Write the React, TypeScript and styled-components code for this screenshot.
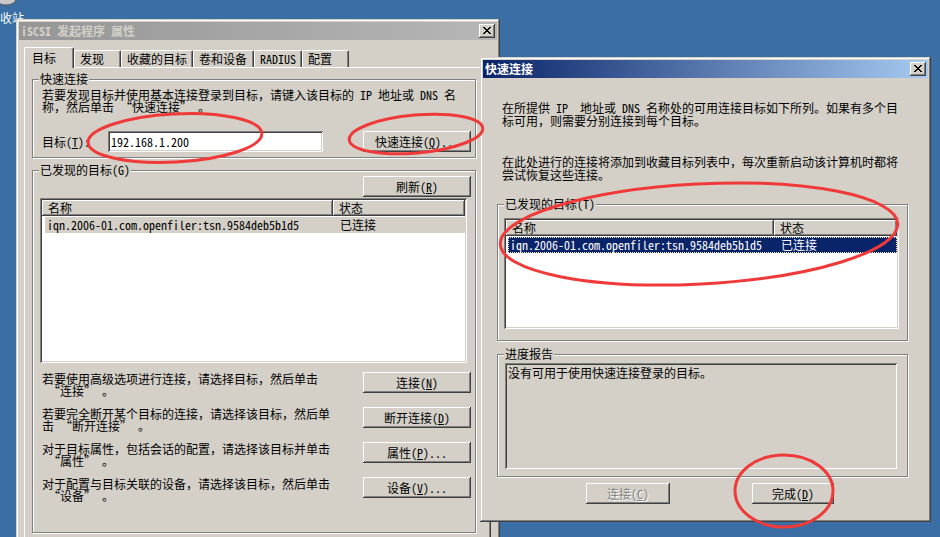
import React from "react";
import styled, { createGlobalStyle } from "styled-components";

const FACE = "#d4d0c8";
const FONT = `"Noto Sans Mono CJK SC", "Noto Sans CJK SC", sans-serif`;

const GlobalStyle = createGlobalStyle`
  html, body { margin: 0; padding: 0; }
  body {
    background: #3a6ea5;
    font-family: ${FONT};
    font-size: 12px;
    overflow: hidden;
  }
`;

const Desktop = styled.div`
  position: relative;
  width: 940px;
  height: 537px;
  overflow: hidden;
  background: #3a6ea5;
  color: #000;
  font-family: ${FONT};
  font-size: 12px;
  line-height: 12px;
`;

const DesktopIcon = styled.div`
  position: absolute;
  left: 0;
  top: 0;
  display: flex;
  flex-direction: column;
  color: #fff;
  font-size: 12px;
  line-height: 12px;
  svg {
    display: block;
  }
  span {
    margin-top: 6px;
  }
`;

// windows sit on the desktop at their own spot
const Window = styled.div<{ $left: number; $top: number; $width: number; $height: number }>`
  position: absolute;
  left: ${(p) => p.$left}px;
  top: ${(p) => p.$top}px;
  width: ${(p) => p.$width}px;
  height: ${(p) => p.$height}px;
  box-sizing: border-box;
  padding: 3px;
  background: ${FACE};
  box-shadow: inset -1px -1px #404040, inset 1px 1px ${FACE},
    inset -2px -2px #808080, inset 2px 2px #fff;
  display: flex;
  flex-direction: column;
`;

const TitleBar = styled.div<{ $active?: boolean }>`
  height: 18px;
  flex-shrink: 0;
  display: flex;
  align-items: center;
  justify-content: space-between;
  padding: 0 2px;
  background: ${(p) =>
    p.$active
      ? "linear-gradient(to right, #0a246a, #a6caf0)"
      : "linear-gradient(to right, #969696, #b6b6b6)"};
  color: ${(p) => (p.$active ? "#fff" : FACE)};
  font-weight: bold;
  white-space: pre;
`;

const CloseButton = styled.div`
  width: 16px;
  height: 14px;
  box-sizing: border-box;
  background: ${FACE};
  box-shadow: inset -1px -1px #404040, inset 1px 1px #fff,
    inset -2px -2px #808080;
  display: flex;
  padding: 3px 0 0 4px;
  svg {
    display: block;
  }
`;

const CloseGlyph = () => (
  <svg width="8" height="7" viewBox="0 0 8 7" shapeRendering="crispEdges">
    {[0, 1, 2, 3, 4, 5, 6].map((i) => (
      <React.Fragment key={i}>
        <rect x={i} y={i} width={2} height={1} fill="#000" />
        <rect x={6 - i} y={i} width={2} height={1} fill="#000" />
      </React.Fragment>
    ))}
  </svg>
);

const Btn = styled.button<{ $w: number }>`
  width: ${(p) => p.$w}px;
  height: 21px;
  flex-shrink: 0;
  margin: 0;
  padding: 0;
  border: none;
  background: ${FACE};
  font: inherit;
  font-size: 12px;
  line-height: 12px;
  color: #000;
  box-shadow: inset -1px -1px #404040, inset 1px 1px #fff,
    inset -2px -2px #808080, inset 2px 2px ${FACE};
  display: flex;
  align-items: center;
  justify-content: center;
  white-space: pre;
  &:disabled {
    color: #808080;
    text-shadow: 1px 1px #fff;
  }
`;

// the mono font draws quote marks half width; pad them to a full cell
const withQuotes = (text: string) =>
  text.replace(/“/g, "\u2002“").replace(/”/g, "”\u2002");

/* ---------- property sheet ---------- */

const SheetBody = styled.div`
  flex: 1;
  display: flex;
  flex-direction: column;
  padding: 7px 6px 0 5px;
`;

const TabStrip = styled.div`
  display: flex;
  align-items: flex-end;
  height: 20px;
  padding-left: 2px;
  position: relative;
  z-index: 2;
`;

const Tab = styled.div<{ $w: number; $active?: boolean }>`
  width: ${(p) => p.$w}px;
  height: ${(p) => (p.$active ? 21 : 17)}px;
  margin: ${(p) => (p.$active ? "0 0 -1px -2px" : "0")};
  box-sizing: border-box;
  background: ${FACE};
  border-top: 1px solid #fff;
  border-left: 1px solid #fff;
  border-right: 1px solid #404040;
  border-top-left-radius: 2px;
  border-top-right-radius: 2px;
  box-shadow: inset -1px 0 #808080;
  padding: ${(p) => (p.$active ? "4px 0 0 7px" : "2px 0 0 5px")};
  white-space: pre;
`;

const TabPanel = styled.div`
  flex: 1;
  display: flex;
  flex-direction: column;
  padding: 5px 0 0 7px;
  border-top: 1px solid #fff;
  border-left: 1px solid #fff;
  border-right: 1px solid #404040;
  box-shadow: inset -1px 0 #808080;
`;

const GroupBox = styled.fieldset<{ $w: number; $mt?: number }>`
  margin: ${(p) => p.$mt ?? 0}px 0 0 0;
  padding: 0;
  min-width: 0;
  width: ${(p) => p.$w}px;
  box-sizing: border-box;
  border: 1px solid #808080;
  box-shadow: inset 1px 1px #fff, 1px 1px #fff;
`;

const Legend = styled.legend`
  margin-left: 6px;
  padding: 0 1px;
  line-height: 12px;
  font-size: 12px;
  background: ${FACE};
  position: relative;
  white-space: pre;
`;

const GroupBody = styled.div<{ $pad: string }>`
  padding: ${(p) => p.$pad};
  display: flex;
  flex-direction: column;
`;

const Para = styled.div<{ $lh?: number; $mt?: number; $ml?: number }>`
  line-height: ${(p) => p.$lh ?? 12}px;
  margin-top: ${(p) => p.$mt ?? 0}px;
  margin-left: ${(p) => p.$ml ?? 0}px;
  white-space: pre;
`;

const TargetRow = styled.div`
  margin-top: 18px;
  display: flex;
  align-items: center;
  height: 21px;
`;

const FieldLabel = styled.span`
  width: 66px;
  flex-shrink: 0;
`;

const TextInput = styled.input`
  width: 215px;
  height: 21px;
  box-sizing: border-box;
  margin: 0 auto 0 0;
  padding: 0 3px;
  border: none;
  outline: none;
  background: #fff;
  font: inherit;
  font-size: 12px;
  box-shadow: inset 1px 1px #808080, inset -1px -1px #fff,
    inset 2px 2px #404040, inset -2px -2px ${FACE};
`;

const ButtonLine = styled.div`
  display: flex;
  justify-content: flex-end;
`;

const ActionList = styled.div`
  margin-top: 9px;
  display: flex;
  flex-direction: column;
  gap: 11px;
`;

const ActionRow = styled.div`
  display: flex;
  justify-content: space-between;
  align-items: flex-start;
  height: 24px;
  padding-left: 2px;
`;

const ActionText = styled.div`
  padding-top: 1px;
  line-height: 12px;
  white-space: pre;
`;

/* ---------- list view ---------- */

const ListBox = styled.div<{ $w: number; $h: number; $mt?: number }>`
  width: ${(p) => p.$w}px;
  height: ${(p) => p.$h}px;
  margin-top: ${(p) => p.$mt ?? 0}px;
  box-sizing: border-box;
  padding: 2px;
  background: #fff;
  box-shadow: inset 1px 1px #808080, inset -1px -1px #fff,
    inset 2px 2px #404040, inset -2px -2px ${FACE};
  display: flex;
  flex-direction: column;
`;

const HeaderRow = styled.div`
  display: flex;
  height: 16px;
  flex-shrink: 0;
`;

const HeaderCell = styled.div<{ $w?: number }>`
  ${(p) => (p.$w ? `width: ${p.$w}px;` : "flex: 1;")}
  box-sizing: border-box;
  padding: 2px 0 0 6px;
  background: ${FACE};
  box-shadow: inset -1px -1px #404040, inset 1px 1px #fff,
    inset -2px -2px #808080;
`;

const ListRow = styled.div<{ $sel: "active" | "inactive"; $inset: number }>`
  margin: 1px 0 0 ${(p) => p.$inset}px;
  height: 16px;
  box-sizing: border-box;
  display: flex;
  align-items: center;
  background: ${(p) => (p.$sel === "active" ? "#0a246a" : FACE)};
  color: ${(p) => (p.$sel === "active" ? "#fff" : "#000")};
  outline: ${(p) => (p.$sel === "active" ? "1px dotted #f3e9a8" : "none")};
  outline-offset: -1px;
  white-space: pre;
`;

const RowCell = styled.div<{ $w?: number; $pl: number }>`
  ${(p) => (p.$w ? `width: ${p.$w}px;` : "flex: 1;")}
  box-sizing: border-box;
  padding-left: ${(p) => p.$pl}px;
  line-height: 16px;
`;

type Col = { title: string; w?: number };

const ListView: React.FC<{
  w: number;
  h: number;
  mt?: number;
  cols: Col[];
  row: string[];
  sel: "active" | "inactive";
  inset: number;
}> = ({ w, h, mt, cols, row, sel, inset }) => (
  <ListBox $w={w} $h={h} $mt={mt}>
    <HeaderRow>
      {cols.map((c) => (
        <HeaderCell key={c.title} $w={c.w}>
          {c.title}
        </HeaderCell>
      ))}
    </HeaderRow>
    <ListRow $sel={sel} $inset={inset}>
      {row.map((text, i) => (
        <RowCell
          key={i}
          $w={cols[i].w ? cols[i].w! - (i === 0 ? inset : 0) : undefined}
          $pl={i === 0 ? 2 : 7}
        >
          {text}
        </RowCell>
      ))}
    </ListRow>
  </ListBox>
);

/* ---------- quick connect dialog ---------- */

const DialogBody = styled.div`
  flex: 1;
  display: flex;
  flex-direction: column;
  padding: 23px 20px 0 14px;
`;

const ReportBox = styled.div`
  width: 392px;
  height: 106px;
  box-sizing: border-box;
  padding: 4px 3px;
  line-height: 12px;
  background: ${FACE};
  box-shadow: inset 1px 1px #808080, inset -1px -1px #fff,
    inset 2px 2px #404040, inset -2px -2px ${FACE};
`;

const DialogButtons = styled.div`
  margin-top: 6px;
  display: flex;
  gap: 82px;
  padding-left: 89px;
`;

const Annotations = styled.svg`
  position: absolute;
  left: 0;
  top: 0;
  pointer-events: none;
  z-index: 20;
`;

const IQN = "iqn.2006-01.com.openfiler:tsn.9584deb5b1d5";

const actions: { text: string; button: React.ReactNode }[] = [
  {
    text: "若要使用高级选项进行连接，请选择目标，然后单击\n“连接”。",
    button: (
      <>
        连接(<u>N</u>)
      </>
    ),
  },
  {
    text: "若要完全断开某个目标的连接，请选择该目标，然后单\n击“断开连接”。",
    button: (
      <>
        断开连接(<u>D</u>)
      </>
    ),
  },
  {
    text: "对于目标属性，包括会话的配置，请选择该目标并单击\n“属性”。",
    button: (
      <>
        属性(<u>P</u>)...
      </>
    ),
  },
  {
    text: "对于配置与目标关联的设备，请选择该目标，然后单击\n“设备”。",
    button: (
      <>
        设备(<u>V</u>)...
      </>
    ),
  },
];

const tabs = [
  { label: "目标", w: 50, active: true },
  { label: "发现", w: 47 },
  { label: "收藏的目标", w: 72 },
  { label: "卷和设备", w: 61 },
  { label: "RADIUS", w: 48 },
  { label: "配置", w: 47 },
];

export default function App() {
  return (
    <Desktop>
      <GlobalStyle />

      <DesktopIcon>
        <svg width="18" height="6" viewBox="0 0 18 6">
          <ellipse cx="6" cy="-1" rx="10" ry="6" fill="#c8c8c8" stroke="#5a5a5a" />
        </svg>
        <span>收站</span>
      </DesktopIcon>

      <Window $left={16} $top={19} $width={484} $height={545}>
        <TitleBar>
          <span>iSCSI 发起程序 属性</span>
          <CloseButton>
            <CloseGlyph />
          </CloseButton>
        </TitleBar>
        <SheetBody>
          <TabStrip>
            {tabs.map((t) => (
              <Tab key={t.label} $w={t.w} $active={t.active}>
                {t.label}
              </Tab>
            ))}
          </TabStrip>
          <TabPanel>
            <GroupBox $w={444}>
              <Legend>快速连接</Legend>
              <GroupBody $pad="4px 4px 5px 9px">
                <Para>
                  {withQuotes(
                    "若要发现目标并使用基本连接登录到目标，请键入该目标的 IP 地址或 DNS 名\n称，然后单击“快速连接”。"
                  )}
                </Para>
                <TargetRow>
                  <FieldLabel>
                    目标(<u>T</u>):
                  </FieldLabel>
                  <TextInput readOnly value="192.168.1.200" />
                  <Btn $w={108}>
                    快速连接(<u>Q</u>)...
                  </Btn>
                </TargetRow>
              </GroupBody>
            </GroupBox>

            <GroupBox $w={444} $mt={6}>
              <Legend>已发现的目标(G)</Legend>
              <GroupBody $pad="0 4px 31px 7px">
                <ButtonLine>
                  <Btn $w={108}>
                    刷新(<u>R</u>)
                  </Btn>
                </ButtonLine>
                <ListView
                  w={427}
                  h={165}
                  mt={1}
                  cols={[{ title: "名称", w: 291 }, { title: "状态" }]}
                  row={[IQN, "已连接"]}
                  sel="inactive"
                  inset={3}
                />
                <ActionList>
                  {actions.map((a) => (
                    <ActionRow key={a.text}>
                      <ActionText>{withQuotes(a.text)}</ActionText>
                      <Btn $w={108}>{a.button}</Btn>
                    </ActionRow>
                  ))}
                </ActionList>
              </GroupBody>
            </GroupBox>
          </TabPanel>
        </SheetBody>
      </Window>

      <Window $left={480} $top={57} $width={451} $height={465}>
        <TitleBar $active>
          <span>快速连接</span>
          <CloseButton>
            <CloseGlyph />
          </CloseButton>
        </TitleBar>
        <DialogBody>
          <Para $lh={13} $ml={5}>
            {"在所提供 IP  地址或 DNS 名称处的可用连接目标如下所列。如果有多个目\n标可用，则需要分别连接到每个目标。"}
          </Para>
          <Para $lh={13} $ml={5} $mt={28}>
            {"在此处进行的连接将添加到收藏目标列表中，每次重新启动该计算机时都将\n尝试恢复这些连接。"}
          </Para>

          <GroupBox $w={411} $mt={17}>
            <Legend>已发现的目标(T)</Legend>
            <GroupBody $pad="8px 9px 11px 6px">
              <ListView
                w={395}
                h={111}
                cols={[{ title: "名称", w: 268 }, { title: "状态" }]}
                row={[IQN, "已连接"]}
                sel="active"
                inset={2}
              />
            </GroupBody>
          </GroupBox>

          <GroupBox $w={411} $mt={7}>
            <Legend>进度报告</Legend>
            <GroupBody $pad="3px 10px 7px 7px">
              <ReportBox>没有可用于使用快速连接登录的目标。</ReportBox>
            </GroupBody>
          </GroupBox>

          <DialogButtons>
            <Btn $w={84} disabled>
              连接(<u>C</u>)
            </Btn>
            <Btn $w={82}>
              完成(<u>D</u>)
            </Btn>
          </DialogButtons>
        </DialogBody>
      </Window>

      <Annotations width={940} height={537} viewBox="0 0 940 537">
        <g fill="none" stroke="#f03a3a" strokeWidth={3}>
          <ellipse cx={175} cy={138} rx={87} ry={24} transform="rotate(-3 175 138)" />
          <ellipse cx={416} cy={134} rx={67} ry={19} transform="rotate(-5 416 134)" />
          <ellipse cx={699} cy={234} rx={199} ry={50} transform="rotate(-3 699 234)" />
          <ellipse cx={784} cy={491} rx={49} ry={36} />
        </g>
      </Annotations>
    </Desktop>
  );
}
